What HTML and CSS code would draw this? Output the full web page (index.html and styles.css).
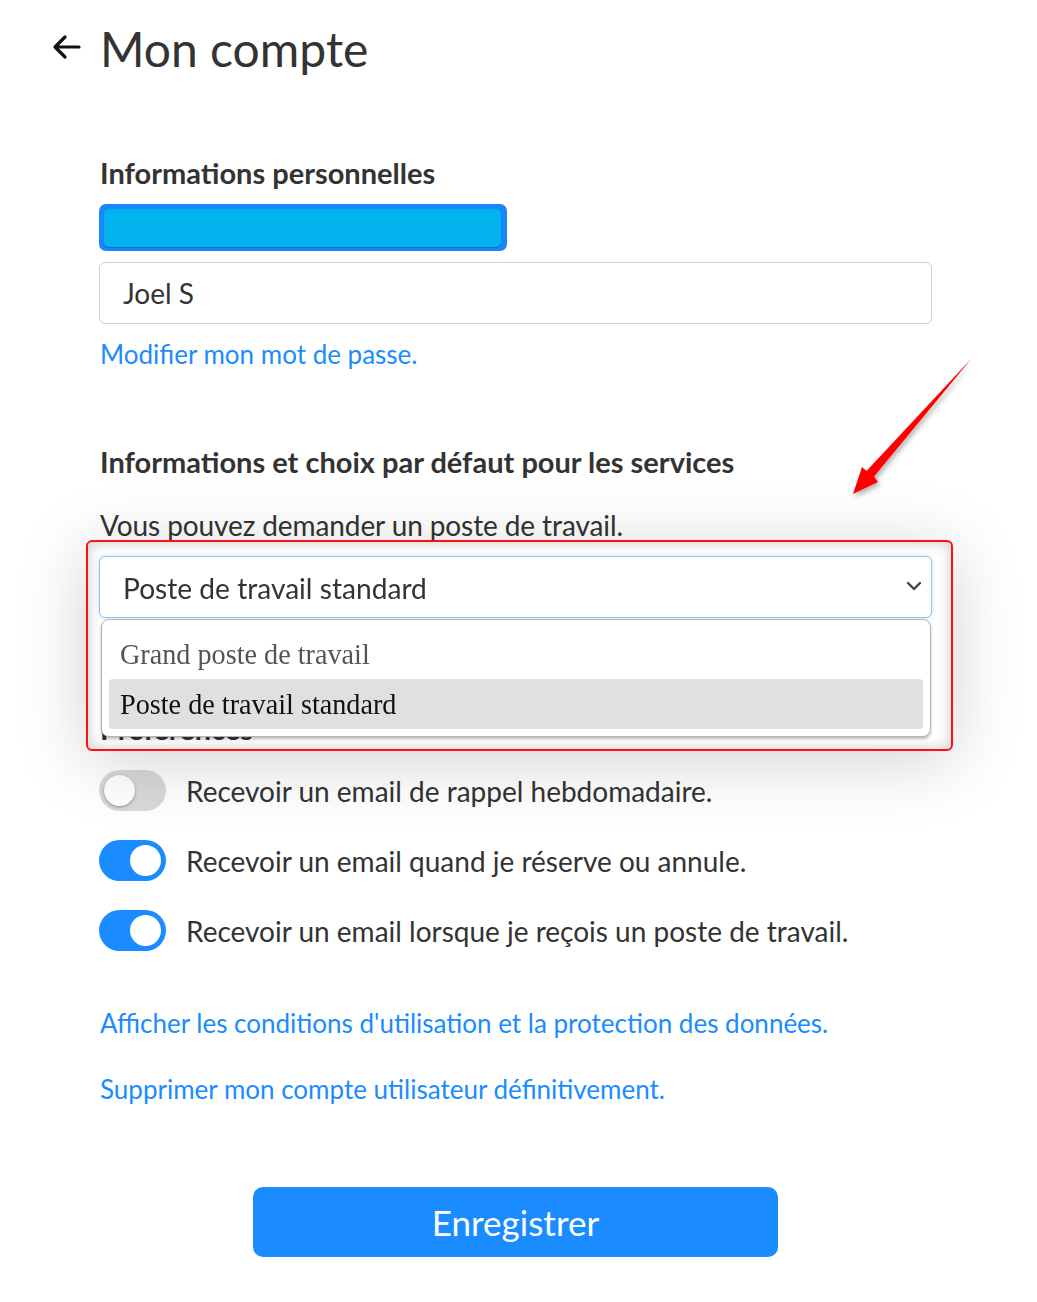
FILE: index.html
```html
<!DOCTYPE html>
<html lang="fr">
<head>
<meta charset="utf-8">
<title>Mon compte</title>
<link rel="stylesheet" href="styles.css">
</head>
<body>
<div class="page">
  <header class="top">
    <svg class="back" width="30" height="26" viewBox="0 0 30 26" aria-hidden="true">
      <path d="M28 13H4M14 3L4 13l10 10" fill="none" stroke="#111" stroke-width="3.2" stroke-linecap="round" stroke-linejoin="round"/>
    </svg>
    <h1 class="title">Mon compte</h1>
  </header>

  <main class="content">
    <h2 class="heading h-personal">Informations personnelles</h2>
    <div class="redact"><div class="redact-fill"></div></div>
    <div class="field">Joel S</div>
    <a class="link link-pass" href="#">Modifier mon mot de passe.</a>

    <h2 class="heading h-services">Informations et choix par défaut pour les services</h2>
    <p class="text">Vous pouvez demander un poste de travail.</p>

    <div class="select-wrap">
      <div class="select">
        <span class="select-value">Poste de travail standard</span>
        <svg class="chevron" width="16" height="10" viewBox="0 0 16 10" aria-hidden="true">
          <path d="M2 2l6 6 6-6" fill="none" stroke="#444" stroke-width="2.4" stroke-linecap="round" stroke-linejoin="round"/>
        </svg>
      </div>
      <div class="popup">
        <div class="option"><span class="opt-text">Grand poste de travail</span></div>
        <div class="option selected"><span class="opt-text">Poste de travail standard</span></div>
      </div>
      <div class="annot-box"></div>
    </div>

    <h2 class="heading h-pref">Préférences</h2>

    <ul class="toggles">
      <li class="toggle-row">
        <span class="toggle off"><span class="knob"></span></span>
        <span class="toggle-label">Recevoir un email de rappel hebdomadaire.</span>
      </li>
      <li class="toggle-row">
        <span class="toggle on"><span class="knob"></span></span>
        <span class="toggle-label">Recevoir un email quand je réserve ou annule.</span>
      </li>
      <li class="toggle-row">
        <span class="toggle on"><span class="knob"></span></span>
        <span class="toggle-label">Recevoir un email lorsque je reçois un poste de travail.</span>
      </li>
    </ul>

    <a class="link link-terms" href="#">Afficher les conditions d'utilisation et la protection des données.</a>
    <a class="link link-delete" href="#">Supprimer mon compte utilisateur définitivement.</a>

    <div class="actions">
      <button class="save" type="button">Enregistrer</button>
    </div>
  </main>

  <svg class="annot-arrow" width="1037" height="520" viewBox="0 0 1037 520" aria-hidden="true">
    <defs>
      <filter id="sh" x="-20%" y="-20%" width="140%" height="140%">
        <feDropShadow dx="2" dy="3" stdDeviation="2.5" flood-color="#000" flood-opacity="0.3"/>
      </filter>
    </defs>
    <polygon filter="url(#sh)" fill="#ff0000" points="972,358 874,476.5 878,482 853,494 862,467 866.5,471"/>
  </svg>
</div>
</body>
</html>
```

FILE: styles.css
```css
* { box-sizing: border-box; }

html, body {
  margin: 0;
  padding: 0;
  background: #fff;
}

body {
  font-family: Lato, "Open Sans", "Liberation Sans", sans-serif;
  color: #333;
}

.page {
  position: relative;
  width: 1037px;
  min-height: 1302px;
}

.top {
  display: flex;
  align-items: center;
  gap: 19px;
  padding: 20px 0 0 51px;
}

.back {
  display: block;
  margin-top: -4px;
}

.title {
  margin: 0;
  font-size: 48px;
  line-height: 58px;
  font-weight: 400;
  color: #333;
}

.content {
  width: 833px;
  margin-left: 99px;
  display: flex;
  flex-direction: column;
  align-items: flex-start;
}

.heading {
  margin: 0;
  font-size: 29px;
  line-height: 34px;
  font-weight: 700;
  color: #333;
  padding-left: 1px;
}

.h-personal { margin-top: 78px; }
.h-services { margin-top: 74px; }
.h-pref { margin-top: 94px; }

.redact {
  margin-top: 14px;
  width: 408px;
  height: 47px;
  border-radius: 7px;
  background: #1787fb;
  padding: 5px 6px 4px 5px;
}

.redact-fill {
  height: 100%;
  border-radius: 5px;
  background: #03b3ee;
  box-shadow: 0 1px 1px rgba(0, 60, 140, 0.45);
}

.field {
  margin-top: 11px;
  width: 100%;
  height: 62px;
  border: 1px solid #d0d0d0;
  border-radius: 6px;
  padding-left: 23px;
  font-size: 28px;
  line-height: 60px;
  color: #333;
}

.link {
  display: block;
  font-size: 26px;
  line-height: 34px;
  color: #1a8cff;
  text-decoration: none;
  padding-left: 1px;
}

.link-pass { margin-top: 13px; }
.link-terms { margin-top: 55px; }
.link-delete { margin-top: 32px; }

.text {
  margin: 29px 0 0;
  font-size: 28px;
  line-height: 34px;
  color: #333;
  padding-left: 1px;
  letter-spacing: -0.1px;
}

.select-wrap {
  position: relative;
  width: 100%;
  margin-top: 14px;
}

.select {
  width: 100%;
  height: 62px;
  border: 1px solid #8dc2f3;
  border-radius: 6px;
  background: #fff;
  box-shadow: 0 0 5px rgba(120, 180, 240, 0.35);
  display: flex;
  align-items: center;
  justify-content: space-between;
  padding: 0 9px 0 23px;
}

.select-value {
  display: inline-block;
  font-size: 29px;
  color: #333;
  transform: scaleX(0.97);
  transform-origin: left center;
  white-space: nowrap;
}

.chevron { display: block; margin-top: -2px; }

.popup {
  position: absolute;
  z-index: 3;
  left: 2px;
  top: 63px;
  width: 830px;
  height: 118px;
  background: #fff;
  border: 1px solid #b5b5b5;
  border-radius: 8px;
  box-shadow: 0 2px 3px rgba(0, 0, 0, 0.25);
  padding: 9px 7px 7px 7px;
}

.option {
  height: 50px;
  border-radius: 4px;
  padding-left: 11px;
  display: flex;
  align-items: center;
  font-family: "Liberation Serif", "Times New Roman", serif;
  font-size: 30px;
  color: #555;
}

.option.selected {
  background: #e0e0e0;
  color: #111;
}

.opt-text {
  display: inline-block;
  transform: scaleX(0.94);
  transform-origin: left center;
  white-space: nowrap;
}

.annot-box {
  position: absolute;
  z-index: 4;
  left: -13px;
  top: -16px;
  width: 867px;
  height: 211px;
  border: 2px solid #ff1010;
  border-radius: 6px;
  pointer-events: none;
  box-shadow: 0 10px 70px rgba(0, 0, 0, 0.18), inset 0 0 14px rgba(0, 0, 0, 0.22);
}

.toggles {
  list-style: none;
  margin: 24px 0 0;
  padding: 0;
  display: flex;
  flex-direction: column;
  gap: 29px;
}

.toggle-row {
  display: flex;
  align-items: center;
  gap: 20px;
}

.toggle {
  position: relative;
  flex: none;
  width: 67px;
  height: 41px;
  border-radius: 21px;
  display: flex;
  align-items: center;
  padding: 0 5px;
}

.toggle.off {
  background: #d9d9d9;
  justify-content: flex-start;
}

.toggle.on {
  background: #1a8cff;
  justify-content: flex-end;
}

.knob {
  width: 31px;
  height: 31px;
  border-radius: 50%;
  background: #fff;
}

.toggle.off .knob {
  box-shadow: 0 1px 3px rgba(0, 0, 0, 0.35);
}

.toggle-label {
  font-size: 28px;
  line-height: 34px;
  color: #333;
}

.actions {
  align-self: stretch;
  display: flex;
  justify-content: center;
  margin-top: 81px;
}

.save {
  width: 525px;
  height: 70px;
  border: none;
  border-radius: 10px;
  background: #1a8cff;
  color: #fff;
  font-family: Lato, "Open Sans", sans-serif;
  font-size: 35px;
  cursor: pointer;
}

.annot-arrow {
  position: absolute;
  left: 0;
  top: 0;
  pointer-events: none;
}
```
